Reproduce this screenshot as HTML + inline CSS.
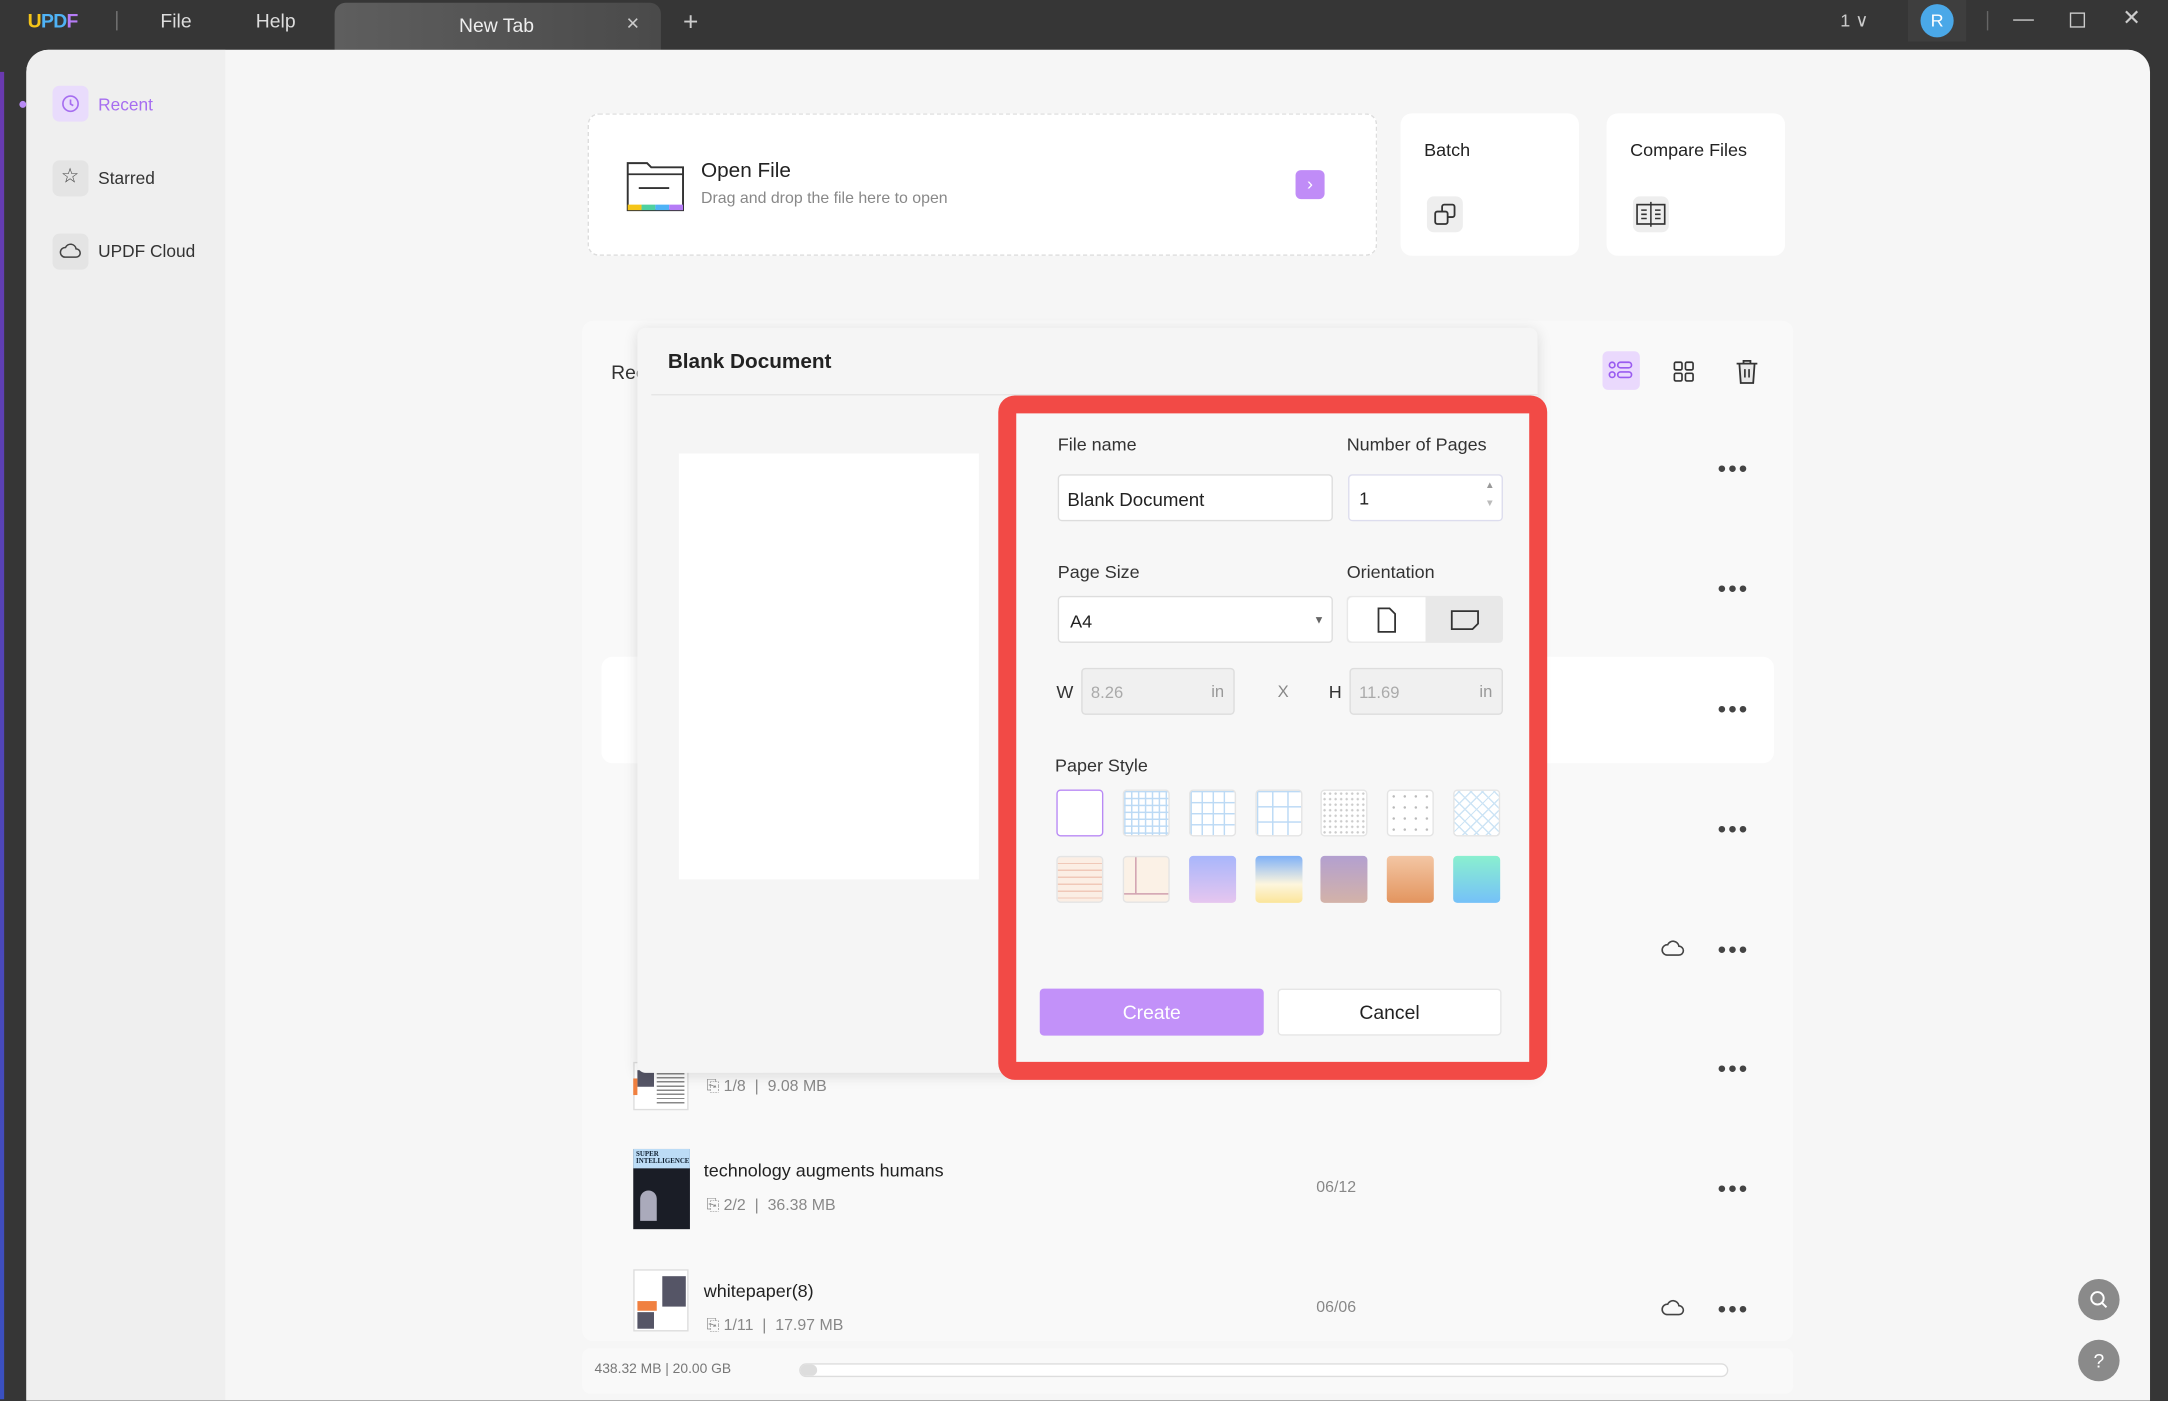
<!DOCTYPE html>
<html><head><meta charset="utf-8"><style>
*{box-sizing:border-box;margin:0;padding:0}
html,body{width:2168px;height:1401px;overflow:hidden;background:#363636;font-family:"Liberation Sans",sans-serif}
#w{position:absolute;left:0;top:0;width:1568px;height:1013px;transform:scale(1.38265);transform-origin:0 0;background:#363636}
.a{position:absolute}
.t{position:absolute;white-space:nowrap;line-height:1}
.dots{position:absolute;font-size:11px;color:#444;letter-spacing:1px;line-height:1}
.sw{position:absolute;width:34px;height:34px;border-radius:3px;border:1px solid #e4e4e4;background:#fff}
.muted{color:#888;font-size:11.5px}
</style></head><body><div id="w">
<!-- top bar -->
<div class="t" style="left:20px;top:8px;font-size:14px;font-weight:bold;letter-spacing:-0.5px"><span style="color:#f5c518">U</span><span style="color:#4fb3f6">P</span><span style="color:#4fb3f6">D</span><span style="color:#b57cf6">F</span></div>
<div class="a" style="left:84px;top:8px;width:1px;height:14px;background:#777"></div>
<div class="t" style="left:116px;top:8px;font-size:14px;color:#ddd">File</div>
<div class="t" style="left:185px;top:8px;font-size:14px;color:#ddd">Help</div>
<div class="a" style="left:242px;top:2px;width:236px;height:34px;border-radius:8px 8px 0 0;background:linear-gradient(90deg,#5e5e5e,#4a4a4a)"></div>
<div class="t" style="left:332px;top:11px;font-size:14px;color:#eee">New Tab</div>
<div class="t" style="left:453px;top:10px;font-size:16px;color:#ccc">×</div>
<div class="t" style="left:494px;top:7px;font-size:19px;color:#ccc">+</div>
<div class="t" style="left:1331px;top:8px;font-size:13px;color:#ccc">1 ∨</div>
<div class="a" style="left:1380px;top:0;width:42px;height:30px;background:#3e3e3e"></div>
<div class="a" style="left:1389px;top:3px;width:24px;height:24px;border-radius:50%;background:#4aa8e8;color:#fff;font-size:13px;text-align:center;line-height:24px">R</div>
<div class="a" style="left:1437px;top:8px;width:1px;height:14px;background:#666"></div>
<div class="a" style="left:1456px;top:14px;width:15px;height:1px;background:#ccc"></div>
<div class="a" style="left:1497px;top:9px;width:11px;height:11px;border:1px solid #ccc"></div>
<div class="t" style="left:1535px;top:6px;font-size:16px;color:#ccc">✕</div>
<div class="a" style="left:0;top:52px;width:3px;height:960px;background:linear-gradient(#6a3ab0,#3a50c0)"></div>
<!-- main panel -->
<div class="a" style="left:19px;top:36px;width:1536px;height:977px;background:#f6f6f6;border-radius:16px 16px 0 0;overflow:hidden">
 <div class="a" style="left:0;top:0;width:144px;height:977px;background:#efefef"></div>
</div>
<div class="a" style="left:14px;top:73px;width:5px;height:5px;border-radius:50%;background:#b88af5"></div>
<div class="a" style="left:38px;top:62px;width:26px;height:26px;border-radius:5px;background:#e9dcfc"></div>
<svg class="a" style="left:44px;top:68px" width="14" height="14" viewBox="0 0 14 14"><circle cx="7" cy="7" r="5.5" fill="none" stroke="#a66ef0" stroke-width="1.2"/><path d="M7 4v3.2l2 1.2" fill="none" stroke="#a66ef0" stroke-width="1.2"/></svg>
<div class="t" style="left:71px;top:70px;font-size:12.5px;color:#a66ef0">Recent</div>
<div class="a" style="left:38px;top:116px;width:26px;height:26px;border-radius:5px;background:#e4e4e4"></div>
<div class="t" style="left:44px;top:120px;font-size:15px;color:#444">☆</div>
<div class="t" style="left:71px;top:123px;font-size:12.5px;color:#333">Starred</div>
<div class="a" style="left:38px;top:169px;width:26px;height:26px;border-radius:5px;background:#e4e4e4"></div>
<svg class="a" style="left:43px;top:175px" width="16" height="14" viewBox="0 0 16 14"><path d="M4 11h8a3 3 0 0 0 0-6 4 4 0 0 0-7.6-1A3.3 3.3 0 0 0 4 11z" fill="none" stroke="#444" stroke-width="1.1"/></svg>
<div class="t" style="left:71px;top:176px;font-size:12.5px;color:#333">UPDF Cloud</div>
<!-- open file -->
<div class="a" style="left:425px;top:82px;width:571px;height:103px;background:#fff;border:1px dashed #ddd;border-radius:8px"></div>
<svg class="a" style="left:452px;top:112px" width="44" height="42" viewBox="0 0 44 42"><path d="M2 6h14l3 3h23v31H2z" fill="#fff" stroke="#333" stroke-width="1.4"/><path d="M2 14h40" stroke="#333" stroke-width="1.3"/><path d="M10 24h22" stroke="#333" stroke-width="1.3"/><rect x="2" y="36" width="10" height="4" fill="#f5c518"/><rect x="12" y="36" width="10" height="4" fill="#4fd0a0"/><rect x="22" y="36" width="10" height="4" fill="#4fb3f6"/><rect x="32" y="36" width="10" height="4" fill="#b57cf6"/></svg>
<div class="t" style="left:507px;top:116px;font-size:15px;color:#222">Open File</div>
<div class="t" style="left:507px;top:139px;font-size:11.5px;color:#888">Drag and drop the file here to open</div>
<div class="a" style="left:937px;top:123px;width:21px;height:21px;border-radius:4px;background:#c08cf7;color:#fff;text-align:center;line-height:20px;font-size:13px">›</div>
<div class="a" style="left:1013px;top:82px;width:129px;height:103px;background:#fff;border-radius:8px"></div>
<div class="t" style="left:1030px;top:102px;font-size:13px;color:#222">Batch</div>
<div class="a" style="left:1032px;top:142px;width:26px;height:26px;border-radius:5px;background:#eee"></div>
<svg class="a" style="left:1036px;top:146px" width="18" height="18" viewBox="0 0 18 18"><rect x="7" y="2" width="9" height="9" rx="1.5" fill="none" stroke="#333" stroke-width="1.3"/><rect x="2" y="7" width="9" height="9" rx="1.5" fill="#eee" stroke="#333" stroke-width="1.3"/></svg>
<div class="a" style="left:1162px;top:82px;width:129px;height:103px;background:#fff;border-radius:8px"></div>
<div class="t" style="left:1179px;top:102px;font-size:13px;color:#222">Compare Files</div>
<div class="a" style="left:1181px;top:142px;width:26px;height:26px;border-radius:5px;background:#eee"></div>
<svg class="a" style="left:1183px;top:145px" width="22" height="20" viewBox="0 0 22 20"><rect x="1" y="3" width="20" height="14" fill="none" stroke="#333" stroke-width="1.2"/><path d="M11 1v18M4 7h4M4 10h4M4 13h4M14 7h4M14 10h4M14 13h4" stroke="#333" stroke-width="1.1"/></svg>
<!-- list panel -->
<div class="a" style="left:421px;top:232px;width:876px;height:738px;background:#f9f9f9;border-radius:8px"></div>
<div class="t" style="left:442px;top:262px;font-size:14px;color:#333">Rec</div>
<div class="a" style="left:1159px;top:254px;width:27px;height:28px;border-radius:4px;background:#ead9fd"></div>
<svg class="a" style="left:1163px;top:259px" width="19" height="18" viewBox="0 0 19 18"><g fill="none" stroke="#9a5cf0" stroke-width="1.2"><circle cx="3" cy="5" r="2"/><circle cx="3" cy="12" r="2"/><rect x="7" y="3" width="10" height="4" rx="2"/><rect x="7" y="10" width="10" height="4" rx="2"/></g></svg>
<svg class="a" style="left:1210px;top:261px" width="16" height="16" viewBox="0 0 16 16"><g fill="none" stroke="#333" stroke-width="1.2"><rect x="1" y="1" width="5.5" height="5.5" rx="1"/><rect x="9" y="1" width="5.5" height="5.5" rx="1"/><rect x="1" y="9" width="5.5" height="5.5" rx="1"/><rect x="9" y="9" width="5.5" height="5.5" rx="1"/></g></svg>
<svg class="a" style="left:1255px;top:259px" width="17" height="19" viewBox="0 0 17 19"><path d="M1 4h15M6 4V2h5v2M3 4l1 14h9l1-14z" fill="#e8e8e8" stroke="#333" stroke-width="1.3"/><path d="M7 8v6M10 8v6" stroke="#333" stroke-width="1.2"/></svg>
<div class="a" style="left:435px;top:475px;width:848px;height:77px;background:#fff;border-radius:8px"></div>
<div class="dots" style="left:1242px;top:334px">●●●</div>
<div class="dots" style="left:1242px;top:421px">●●●</div>
<div class="dots" style="left:1242px;top:508px">●●●</div>
<div class="dots" style="left:1242px;top:595px">●●●</div>
<div class="dots" style="left:1242px;top:682px">●●●</div>
<div class="dots" style="left:1242px;top:768px">●●●</div>
<div class="dots" style="left:1242px;top:855px">●●●</div>
<div class="dots" style="left:1242px;top:942px">●●●</div>
<svg class="a" style="left:1201px;top:679px" width="18" height="15" viewBox="0 0 16 14"><path d="M4 11h8a3 3 0 0 0 0-6 4 4 0 0 0-7.6-1A3.3 3.3 0 0 0 4 11z" fill="none" stroke="#444" stroke-width="1.1"/></svg>
<svg class="a" style="left:1201px;top:939px" width="18" height="15" viewBox="0 0 16 14"><path d="M4 11h8a3 3 0 0 0 0-6 4 4 0 0 0-7.6-1A3.3 3.3 0 0 0 4 11z" fill="none" stroke="#444" stroke-width="1.1"/></svg>
<!-- thumbnails -->
<div class="a" style="left:458px;top:768px;width:40px;height:35px;background:#fff;border:1px solid #ddd"><div class="a" style="left:2px;top:5px;width:12px;height:12px;background:#556"></div><div class="a" style="left:16px;top:4px;width:20px;height:26px;background:repeating-linear-gradient(#888 0 1px,#fff 1px 3px)"></div></div>
<div class="a" style="left:458px;top:780px;width:3px;height:12px;background:#f08040"></div>
<div class="t muted" style="left:511px;top:781px">⎘ 1/8 &nbsp;| &nbsp;9.08 MB</div>
<div class="a" style="left:458px;top:831px;width:41px;height:58px;background:#1a1d26"><div class="a" style="left:0;top:0;width:41px;height:14px;background:#bcdcf6"></div><div class="t" style="left:2px;top:2px;font-size:5px;color:#123;font-family:'Liberation Serif',serif;font-weight:bold">SUPER<br>INTELLIGENCE</div><div class="a" style="left:5px;top:30px;width:12px;height:22px;border-radius:6px 6px 0 0;background:#aab"></div></div>
<div class="t" style="left:509px;top:840px;font-size:13px;color:#222">technology augments humans</div>
<div class="t muted" style="left:511px;top:867px">⎘ 2/2 &nbsp;| &nbsp;36.38 MB</div>
<div class="t" style="left:952px;top:854px;font-size:11.5px;color:#888">06/12</div>
<div class="a" style="left:458px;top:918px;width:40px;height:45px;background:#fff;border:1px solid #ddd"><div class="a" style="left:20px;top:4px;width:17px;height:22px;background:#556"></div><div class="a" style="left:2px;top:22px;width:14px;height:7px;background:#f08040"></div><div class="a" style="left:2px;top:30px;width:12px;height:12px;background:#556"></div></div>
<div class="t" style="left:509px;top:927px;font-size:13px;color:#222">whitepaper(8)</div>
<div class="t muted" style="left:511px;top:954px">⎘ 1/11 &nbsp;| &nbsp;17.97 MB</div>
<div class="t" style="left:952px;top:941px;font-size:11.5px;color:#888">06/06</div>
<div class="a" style="left:421px;top:975px;width:876px;height:33px;background:#f9f9f9;border-radius:6px"></div>
<div class="t" style="left:430px;top:986px;font-size:10px;color:#777">438.32 MB | 20.00 GB</div>
<div class="a" style="left:578px;top:986px;width:672px;height:10px;border-radius:5px;background:#fff;border:1px solid #ddd"></div>
<div class="a" style="left:579px;top:987px;width:12px;height:8px;border-radius:4px;background:#ddd"></div>
<div class="a" style="left:1503px;top:925px;width:30px;height:30px;border-radius:50%;background:#8a8a8a"></div>
<svg class="a" style="left:1510px;top:932px" width="16" height="16" viewBox="0 0 16 16"><circle cx="7" cy="7" r="4.5" fill="none" stroke="#fff" stroke-width="1.4"/><path d="M10.5 10.5l3 3" stroke="#fff" stroke-width="1.4"/></svg>
<div class="a" style="left:1503px;top:969px;width:30px;height:30px;border-radius:50%;background:#8a8a8a;color:#fff;text-align:center;line-height:30px;font-size:14px">?</div>
<!-- dialog -->
<div class="a" style="left:461px;top:237px;width:651px;height:539px;background:#f5f5f5;border-radius:6px;box-shadow:0 2px 10px rgba(0,0,0,0.12)"></div>
<div class="t" style="left:483px;top:254px;font-size:15px;font-weight:bold;color:#222">Blank Document</div>
<div class="a" style="left:471px;top:285px;width:641px;height:1px;background:#e6e6e6"></div>
<div class="a" style="left:491px;top:328px;width:217px;height:308px;background:#fff"></div>
<div class="a" style="left:722px;top:286px;width:397px;height:495px;border:13px solid #f24a46;border-radius:12px;background:#f7f7f7"></div>
<div class="t" style="left:765px;top:315px;font-size:13px;color:#333">File name</div>
<div class="t" style="left:974px;top:315px;font-size:13px;color:#333">Number of Pages</div>
<div class="a" style="left:765px;top:343px;width:199px;height:34px;background:#fff;border:1px solid #ddd;border-radius:3px"></div>
<div class="t" style="left:772px;top:355px;font-size:13.5px;color:#222">Blank Document</div>
<div class="a" style="left:975px;top:343px;width:112px;height:34px;background:#fff;border:1px solid #dde;border-radius:3px"></div>
<div class="t" style="left:983px;top:354px;font-size:13px;color:#222">1</div>
<div class="t" style="left:1074px;top:348px;font-size:7px;color:#999">▲</div>
<div class="t" style="left:1074px;top:361px;font-size:7px;color:#bbb">▼</div>
<div class="t" style="left:765px;top:407px;font-size:13px;color:#333">Page Size</div>
<div class="t" style="left:974px;top:407px;font-size:13px;color:#333">Orientation</div>
<div class="a" style="left:765px;top:431px;width:199px;height:34px;background:#fff;border:1px solid #ddd;border-radius:3px"></div>
<div class="t" style="left:774px;top:443px;font-size:13px;color:#222">A4</div>
<div class="t" style="left:950px;top:445px;font-size:8px;color:#666">▼</div>
<div class="a" style="left:974px;top:431px;width:113px;height:34px;background:#e8e8e8;border-radius:3px"></div>
<div class="a" style="left:975px;top:432px;width:56px;height:32px;background:#fff;border-radius:3px 0 0 3px"></div>
<svg class="a" style="left:995px;top:439px" width="16" height="19" viewBox="0 0 16 19"><path d="M2 1h8l4 4v13H2z" fill="none" stroke="#333" stroke-width="1.3"/></svg>
<svg class="a" style="left:1049px;top:441px" width="21" height="15" viewBox="0 0 21 15"><path d="M1 1h19v9l-4 4H1z" fill="none" stroke="#333" stroke-width="1.3"/></svg>
<div class="t" style="left:764px;top:494px;font-size:13px;color:#333">W</div>
<div class="a" style="left:782px;top:483px;width:111px;height:34px;background:#f0f0f0;border:1px solid #ddd;border-radius:3px"></div>
<div class="t" style="left:789px;top:495px;font-size:12px;color:#aaa">8.26</div>
<div class="t" style="left:876px;top:494px;font-size:12px;color:#999">in</div>
<div class="t" style="left:924px;top:494px;font-size:12px;color:#888">X</div>
<div class="t" style="left:961px;top:494px;font-size:13px;color:#333">H</div>
<div class="a" style="left:976px;top:483px;width:111px;height:34px;background:#f0f0f0;border:1px solid #ddd;border-radius:3px"></div>
<div class="t" style="left:983px;top:495px;font-size:12px;color:#aaa">11.69</div>
<div class="t" style="left:1070px;top:494px;font-size:12px;color:#999">in</div>
<div class="t" style="left:763px;top:547px;font-size:13px;color:#333">Paper Style</div>
<div class="sw" style="left:764px;top:571px;border:1.5px solid #b98af5"></div>
<div class="sw" style="left:812px;top:571px;background-image:linear-gradient(#bcdaf5 1px,transparent 1px),linear-gradient(90deg,#bcdaf5 1px,transparent 1px);background-size:5px 5px"></div>
<div class="sw" style="left:860px;top:571px;background-image:linear-gradient(#bcdaf5 1px,transparent 1px),linear-gradient(90deg,#bcdaf5 1px,transparent 1px);background-size:8px 8px"></div>
<div class="sw" style="left:908px;top:571px;background-image:linear-gradient(#bcdaf5 1px,transparent 1px),linear-gradient(90deg,#bcdaf5 1px,transparent 1px);background-size:11px 11px"></div>
<div class="sw" style="left:955px;top:571px;background-image:radial-gradient(#ccc 0.8px,transparent 1px);background-size:4px 4px"></div>
<div class="sw" style="left:1003px;top:571px;background-image:radial-gradient(#bbb 0.8px,transparent 1px);background-size:8px 8px"></div>
<div class="sw" style="left:1051px;top:571px;background-image:repeating-linear-gradient(45deg,#cde4f5 0 1px,transparent 1px 6px),repeating-linear-gradient(-45deg,#cde4f5 0 1px,transparent 1px 6px)"></div>
<div class="sw" style="left:764px;top:619px;background:repeating-linear-gradient(#fbeee4 0 4px,#f0c8b8 4px 5px)"></div>
<div class="sw" style="left:812px;top:619px;background:#fbf1e6"><div class="a" style="left:8px;top:0;width:1px;height:26px;background:#c9a"></div><div class="a" style="left:0;top:26px;width:32px;height:1px;background:#c9a"></div></div>
<div class="sw" style="left:860px;top:619px;background:linear-gradient(#a8b6fb,#e6c6ef);border:none"></div>
<div class="sw" style="left:908px;top:619px;background:linear-gradient(#7fb1f7,#fdf6de 60%,#fbe59a);border:none"></div>
<div class="sw" style="left:955px;top:619px;background:linear-gradient(#b3a0d0,#d3b2a8);border:none"></div>
<div class="sw" style="left:1003px;top:619px;background:linear-gradient(#f3c6a4,#e3955f);border:none"></div>
<div class="sw" style="left:1051px;top:619px;background:linear-gradient(#8af0cf,#75c1f8);border:none"></div>
<div class="a" style="left:752px;top:715px;width:162px;height:34px;background:#c291f9;border-radius:3px;color:#fff;text-align:center;line-height:34px;font-size:14px">Create</div>
<div class="a" style="left:924px;top:715px;width:162px;height:34px;background:#fff;border:1px solid #e6e6e6;border-radius:3px;color:#222;text-align:center;line-height:32px;font-size:14px">Cancel</div>
</div></body></html>
